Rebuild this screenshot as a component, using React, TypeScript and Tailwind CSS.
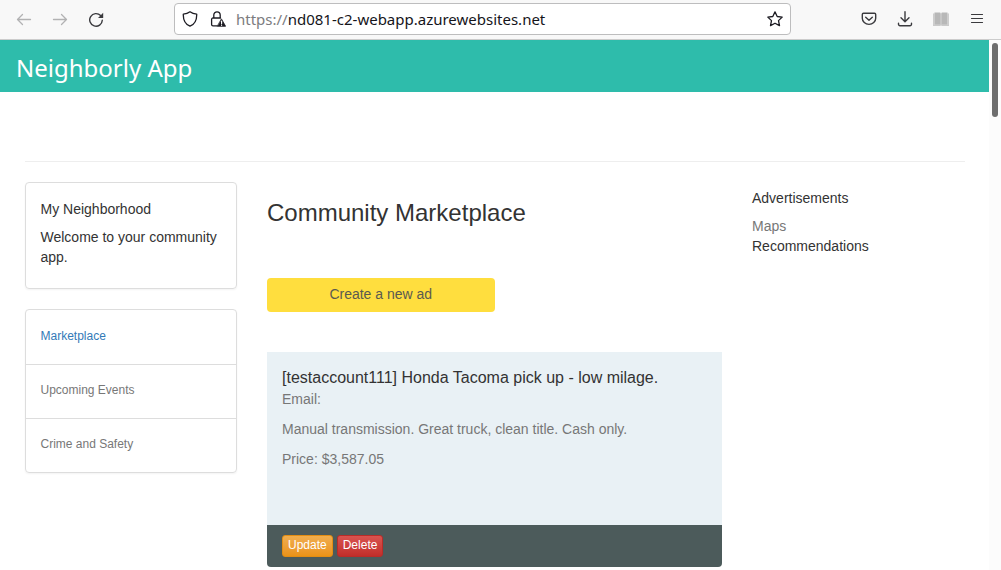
import type { ReactNode } from "react";

function Icon({ children }: { children: ReactNode }) {
  return (
    <svg
      viewBox="0 0 16 16"
      className="block size-4"
      fill="none"
      stroke="currentColor"
      strokeWidth="1.3"
      strokeLinecap="round"
      strokeLinejoin="round"
      aria-hidden="true"
    >
      {children}
    </svg>
  );
}

function ToolButton({ label, disabled, children }: { label: string; disabled?: boolean; children: ReactNode }) {
  return (
    <button type="button" aria-label={label} disabled={disabled} className="shrink-0 text-[#3a3a3e] disabled:text-[#b2b2b3]">
      <Icon>{children}</Icon>
    </button>
  );
}

function BrowserBar() {
  return (
    <div className="flex h-10 items-center border-b border-[#cccccc] bg-[#f8f8f8] px-4 pb-px">
      <div className="flex gap-5">
        <ToolButton label="Back" disabled>
          <path d="M14.5 8.500H1.500M6.500 3.500l-5 5 5 5" />
        </ToolButton>
        <ToolButton label="Forward" disabled>
          <path d="M1.500 8.500h13M9.500 3.500l5 5-5 5" />
        </ToolButton>
        <ToolButton label="Reload">
          <path d="M14.300 9.200A6.300 6.300 0 1 1 12.600 4.600" strokeWidth="1.4" />
          <path d="M15.200 1.800v5.200H10z" fill="currentColor" stroke="none" />
        </ToolButton>
      </div>
      <div className="mx-[70px] flex h-8 min-w-0 flex-1 items-center rounded border border-[#bdbdbe] bg-white px-[7px] text-[#1c1b22]">
        <Icon>
          <path d="M8 .8C6.100 2.300 3.700 3 1.300 3.100c-.200 5.400 1.600 9.900 6.700 12.100 5.100-2.200 6.900-6.700 6.700-12.100C12.300 3 9.900 2.300 8 .8z" />
        </Icon>
        <span className="ml-3">
          <Icon>
            <path d="M3.800 7V4a3.200 3.200 0 0 1 6.400 0v3M7 14.800H3A1.400 1.400 0 0 1 1.600 13.400V8.400A1.400 1.400 0 0 1 3 7h7.500" strokeWidth="1.300" />
            <path d="M11.600 8.200 15.600 15.300H7.600z" fill="currentColor" strokeWidth="0.800" />
            <path d="M11.600 10.200v2.400M11.600 14.200v.1" stroke="white" strokeWidth="1.200" />
          </Icon>
        </span>
        <label htmlFor="address" className="ml-[10px] font-['Noto_Sans',sans-serif] text-[15px] leading-5 text-[#7c7c80]">
          https://
        </label>
        <input
          id="address"
          type="text"
          defaultValue="nd081-c2-webapp.azurewebsites.net"
          className="min-w-0 flex-1 bg-transparent font-['Noto_Sans',sans-serif] text-[15px] leading-5 text-[#15141a] outline-none"
        />
        <button type="button" aria-label="Bookmark this page">
          <Icon>
            <path d="M8 .9l2.200 4.600 5 .600-3.700 3.500 1 5L8 12.200l-4.500 2.400 1-5L.8 6.100l5-.600z" />
          </Icon>
        </button>
      </div>
      <div className="flex gap-5">
        <ToolButton label="Save to Pocket">
          <path d="M2.500 2.200h11c.700 0 1.200.500 1.200 1.200v3.800a6.700 6.200 0 0 1-13.400 0V3.400c0-.700.500-1.200 1.200-1.200z" strokeWidth="1.400" />
          <path d="m4.700 6.200 3.300 3 3.300-3" strokeWidth="1.400" />
        </ToolButton>
        <ToolButton label="Downloads">
          <path d="M8 .8v9.700M4 6.800l4 4 4-4M1.500 12.200v1a1.500 1.500 0 0 0 1.500 1.500h10a1.500 1.500 0 0 0 1.500-1.500v-1" strokeWidth="1.400" />
        </ToolButton>
        <ToolButton label="Library" disabled>
          <path d="M0 2.500h16V15H9l-1-.500-1 .500H0z" fill="#cacaca" stroke="none" />
          <path d="M1.500 1.500H7l.7.700v11.800L7 13.300H1.500zM14.500 1.500H9l-.7.700v11.800l.7-.700h5.500z" fill="#b8b8b8" stroke="none" />
          <path d="M1.200 2.500V13.500M14.800 2.500V13.500M8 2v11.500" stroke="#dedede" strokeWidth="0.600" />
        </ToolButton>
        <ToolButton label="Application menu">
          <path d="M2.500 3.500h11M2.500 7.500h11M2.500 11.500h11" strokeWidth="1.200" />
        </ToolButton>
      </div>
    </div>
  );
}

const links = [
  { label: "Marketplace", active: true },
  { label: "Upcoming Events", active: false },
  { label: "Crime and Safety", active: false },
];

function Sidebar() {
  return (
    <aside className="flex flex-col gap-5">
      <section className="rounded border border-[#dddddd] px-[15px] pt-4 pb-[21px] shadow-xs">
        <h2 className="mb-2">My Neighborhood</h2>
        <p>Welcome to your community app.</p>
      </section>
      <nav className="divide-y divide-[#dddddd] rounded border border-[#dddddd] pt-px text-xs leading-5 shadow-xs">
        {links.map((link) => (
          <a
            key={link.label}
            href="#"
            className={link.active ? "block px-[15px] pt-[15px] pb-[18px] text-[#337ab7]" : "block px-[15px] pt-[15px] pb-[18px] text-[#777777]"}
          >
            {link.label}
          </a>
        ))}
      </nav>
    </aside>
  );
}

function AdCard() {
  return (
    <article className="mt-10 overflow-hidden rounded-b">
      <div className="bg-[#e9f1f5] px-[15px] pt-[14px] pb-14 text-[#777777]">
        <h3 className="text-base leading-[23px] text-[#333333]">[testaccount111] Honda Tacoma pick up - low milage.</h3>
        <p className="mb-[10px]">Email:</p>
        <p className="mb-[10px]">Manual transmission. Great truck, clean title. Cash only.</p>
        <p>Price: $3,587.05</p>
      </div>
      <div className="flex gap-1 bg-[#4c5b5b] px-[15px] py-[10px] text-xs leading-[18px] text-white [text-shadow:0_-1px_0_rgba(0,0,0,0.2)]">
        <button type="button" className="rounded-[3px] border border-[#e38d13] bg-linear-to-b from-[#f0ad4e] to-[#eb9316] px-[5px] pb-[2px]">
          Update
        </button>
        <button type="button" className="rounded-[3px] border border-[#b92c28] bg-linear-to-b from-[#d9534f] to-[#c12e2a] px-[5px] pb-[2px]">
          Delete
        </button>
      </div>
    </article>
  );
}

export default function App() {
  return (
    <div className="flex h-screen flex-col overflow-hidden bg-white font-['Liberation_Sans',Arial,sans-serif] text-sm leading-5 text-[#333333]">
      <BrowserBar />
      <div className="flex min-h-0 flex-1">
        <div className="min-w-0 flex-1 overflow-hidden">
          <header className="bg-[#2ebcab] px-4 py-2">
            <h1 className="pt-1 font-['Noto_Sans',sans-serif] text-2xl leading-8 text-white">Neighborly App</h1>
          </header>
          <main className="mx-auto max-w-[970px] px-[15px] pt-[69px]">
            <hr className="border-[#eeeeee]" />
            <div className="mt-5 grid grid-cols-4 gap-[30px]">
              <Sidebar />
              <section className="col-span-2">
                <h2 className="mt-[15px] text-2xl leading-8">Community Marketplace</h2>
                <button type="button" className="mt-[49px] block w-1/2 rounded bg-[#ffde3e] pt-[6px] pb-2 text-[#5a5a50]">
                  Create a new ad
                </button>
                <AdCard />
              </section>
              <aside className="pt-[6px]">
                <h2 className="mb-2">Advertisements</h2>
                <p>
                  <a href="#" className="text-[#777777]">Maps</a>
                </p>
                <p>Recommendations</p>
              </aside>
            </div>
          </main>
        </div>
        <div className="w-3 shrink-0 bg-[#fcfcfc] p-[3px]">
          <div className="h-[74px] rounded-full bg-[#6e6e6e]" />
        </div>
      </div>
    </div>
  );
}
